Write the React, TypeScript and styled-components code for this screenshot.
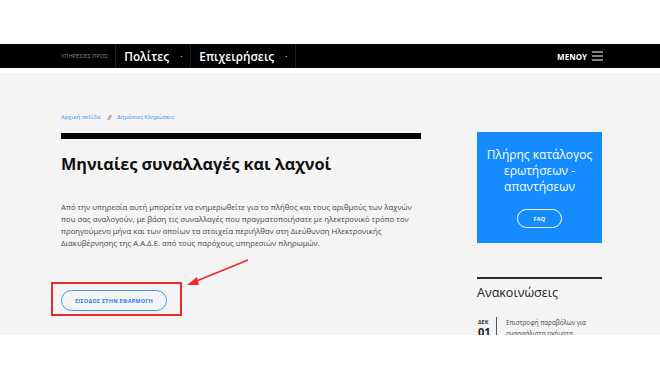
import React from "react";
import styled, { createGlobalStyle } from "styled-components";

const Global = createGlobalStyle`
  html, body { margin: 0; padding: 0; background: #fff; }
  body { font-family: "Open Sans", "Noto Sans", sans-serif; }
  * { box-sizing: border-box; }
`;

const Page = styled.div`
  width: 660px;
  height: 380px;
  position: relative;
  overflow: hidden;
  background: #fff;
`;

const TopSpace = styled.div`
  height: 44px;
`;

const NavBar = styled.nav`
  height: 24px;
  background: #000;
  display: flex;
  align-items: stretch;
  padding: 0 57px 0 61px;
`;

const NavLabel = styled.span`
  font-size: 5.6px;
  color: #8a8a8a;
  display: flex;
  align-items: center;
  padding-right: 6px;
  border-right: 1px solid #1e1e1e;
  letter-spacing: 0.1px;
`;

const NavItem = styled.a`
  display: flex;
  align-items: center;
  gap: 11px;
  padding: 0 8px 0 8px;
  border-right: 1px solid #1e1e1e;
  color: #fff;
  font-size: 11.8px;
  font-weight: 600;
  text-decoration: none;
`;

const Caret = styled.span`
  font-size: 8px;
  color: #ddd;
`;

const NavSpacer = styled.div`
  flex: 1;
`;

const MenuBtn = styled.div`
  display: flex;
  align-items: center;
  gap: 5px;
  color: #fff;
  font-size: 8px;
  font-weight: 700;
`;

const Gap = styled.div`
  height: 5px;
`;

const Main = styled.main`
  height: 262px;
  background: #f4f4f4;
  overflow: hidden;
  display: grid;
  grid-template-columns: 360px 125px;
  column-gap: 56px;
  padding: 0 57px 0 61px;
`;

const LeftCol = styled.section`
  padding-top: 40px;
  display: flex;
  flex-direction: column;
  align-items: flex-start;
`;

const Crumbs = styled.div`
  display: flex;
  align-items: center;
  gap: 7px;
  font-size: 5.9px;
  color: #3a8ef0;
  height: 8px;
`;

const Sep = styled.span`
  color: #555;
  font-size: 7px;
  font-style: italic;
  letter-spacing: -1px;
`;

const Rule = styled.div<{ $h: number; $c: string }>`
  width: 100%;
  height: ${(p) => p.$h}px;
  background: ${(p) => p.$c};
`;

const Title = styled.h1`
  margin: 14px 0 0;
  font-size: 16.3px;
  line-height: 22px;
  font-weight: 700;
  color: #111;
  letter-spacing: -0.05px;
`;

const Text = styled.p`
  margin: 26px 0 0;
  font-size: 7.75px;
  line-height: 12px;
  color: #444;
  width: 362px;
`;

const Highlight = styled.div`
  margin: 33px 0 0 -10px;
  border: 2px solid #f2262b;
  padding: 6px 13px 3px 8px;
`;

const PillBtn = styled.a<{ $light?: boolean }>`
  display: flex;
  align-items: center;
  justify-content: center;
  border-radius: 11px;
  border: 1.5px solid ${(p) => (p.$light ? "#fff" : "#3d98f5")};
  color: ${(p) => (p.$light ? "#fff" : "#2c7fe0")};
  font-size: 5.5px;
  font-weight: 700;
  letter-spacing: 0.2px;
  text-decoration: none;
`;

const EntryBtn = styled(PillBtn)`
  width: 106px;
  height: 21px;
`;

const RightCol = styled.aside`
  padding-top: 59px;
  display: flex;
  flex-direction: column;
`;

const BlueBox = styled.div`
  background: #148cff;
  height: 111px;
  display: flex;
  flex-direction: column;
  align-items: center;
  padding-top: 15px;
`;

const BoxTitle = styled.div`
  color: #fff;
  font-size: 12px;
  line-height: 16px;
  text-align: center;
  width: 112px;
`;

const FaqBtn = styled(PillBtn)`
  margin-top: 14px;
  width: 45px;
  height: 19px;
  border-radius: 10px;
`;

const AnnTitle = styled.h2`
  margin: 6px 0 0;
  font-size: 12.5px;
  font-weight: 400;
  color: #222;
  line-height: 16px;
`;

const AnnItem = styled.div`
  margin-top: 16px;
  display: flex;
`;

const DateCol = styled.div`
  width: 14px;
  display: flex;
  flex-direction: column;
  padding-left: 1px;
  padding-top: 2px;
`;

const Month = styled.span`
  font-size: 5.5px;
  font-weight: 700;
  color: #333;
  line-height: 7px;
`;

const Day = styled.span`
  font-size: 11px;
  font-weight: 700;
  color: #222;
  line-height: 12px;
`;

const VLine = styled.div`
  width: 1px;
  height: 20px;
  background: #555;
  margin: 0 9px 0 5px;
`;

const AnnText = styled.div`
  font-size: 6.3px;
  line-height: 11px;
  color: #444;
  width: 95px;
`;

const Arrow = styled.svg`
  position: absolute;
  left: 180px;
  top: 255px;
`;

export default function App() {
  return (
    <Page>
      <Global />
      <TopSpace />
      <NavBar>
        <NavLabel>ΥΠΗΡΕΣΙΕΣ ΠΡΟΣ:</NavLabel>
        <NavItem href="#">
          Πολίτες <Caret>·</Caret>
        </NavItem>
        <NavItem href="#">
          Επιχειρήσεις <Caret>·</Caret>
        </NavItem>
        <NavSpacer />
        <MenuBtn>
          ΜΕΝΟΥ
          <svg width="11" height="10" viewBox="0 0 11 10">
            <path d="M0 1h11M0 5h11M0 9h11" stroke="#fff" strokeWidth="1" />
          </svg>
        </MenuBtn>
      </NavBar>
      <Gap />
      <Main>
        <LeftCol>
          <Crumbs>
            <span>Αρχική σελίδα</span>
            <Sep>//</Sep>
            <span>Δημόσιες Κληρώσεις</span>
          </Crumbs>
          <div style={{ height: 12 }} />
          <Rule $h={6} $c="#000" />
          <Title>Μηνιαίες συναλλαγές και λαχνοί</Title>
          <Text>
            Από την υπηρεσία αυτή μπορείτε να ενημερωθείτε για το πλήθος και τους αριθμούς των λαχνών
            που σας αναλογούν, με βάση τις συναλλαγές που πραγματοποιήσατε με ηλεκτρονικό τρόπο τον
            προηγούμενο μήνα και των οποίων τα στοιχεία περιήλθαν στη Διεύθυνση Ηλεκτρονικής
            Διακυβέρνησης της Α.Α.Δ.Ε. από τους παρόχους υπηρεσιών πληρωμών.
          </Text>
          <Highlight>
            <EntryBtn href="#">ΕΙΣΟΔΟΣ ΣΤΗΝ ΕΦΑΡΜΟΓΗ</EntryBtn>
          </Highlight>
        </LeftCol>
        <RightCol>
          <BlueBox>
            <BoxTitle>Πλήρης κατάλογος ερωτήσεων - απαντήσεων</BoxTitle>
            <FaqBtn href="#" $light>
              FAQ
            </FaqBtn>
          </BlueBox>
          <div style={{ height: 34 }} />
          <Rule $h={2} $c="#2a2a2a" />
          <AnnTitle>Ανακοινώσεις</AnnTitle>
          <AnnItem>
            <DateCol>
              <Month>ΔΕΚ</Month>
              <Day>01</Day>
            </DateCol>
            <VLine />
            <AnnText>Επιστροφή παραβόλων για ανασφάλιστα οχήματα</AnnText>
          </AnnItem>
        </RightCol>
      </Main>
      <Arrow width="75" height="35" viewBox="0 0 75 35">
        <line x1="68" y1="5" x2="14" y2="27" stroke="#f2262b" strokeWidth="1.6" />
        <polygon points="7,30 17,22 19,30" fill="#f2262b" />
      </Arrow>
    </Page>
  );
}
